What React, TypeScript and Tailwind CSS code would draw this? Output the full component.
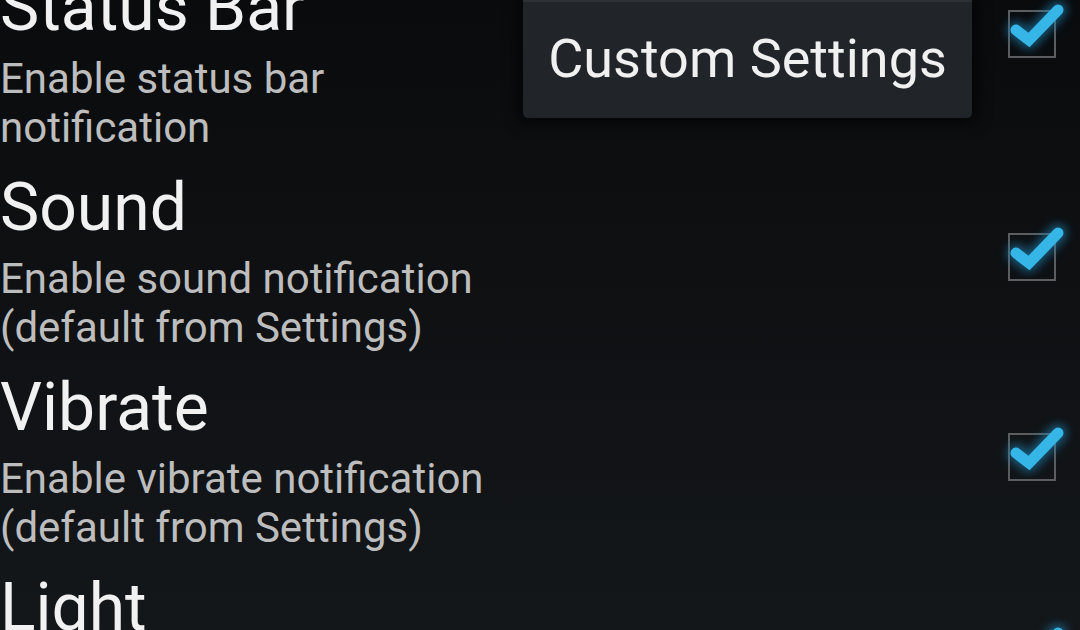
import React from "react";

type Item = { title: string; lines: string[]; checked: boolean; boxTop: number };

const items: Item[] = [
  { title: "Status Bar", lines: ["Enable status bar", "notification"], checked: true, boxTop: 50 },
  { title: "Sound", lines: ["Enable sound notification", "(default from Settings)"], checked: true, boxTop: 73 },
  { title: "Vibrate", lines: ["Enable vibrate notification", "(default from Settings)"], checked: true, boxTop: 73 },
  { title: "Light", lines: ["Enable light notification", "(default from Settings)"], checked: true, boxTop: 73 },
];

function CheckBox() {
  return (
    <div className="relative w-[48px] h-[48px]">
      <div className="absolute inset-0 border-2 border-[#5b5d60]" />
      <svg
        className="absolute left-[-10px] top-[-22px] overflow-visible"
        width="72"
        height="64"
        viewBox="0 0 72 64"
      >
        <defs>
          <filter id="glow" x="-50%" y="-50%" width="200%" height="200%">
            <feGaussianBlur stdDeviation="5" />
          </filter>
        </defs>
        <polyline
          points="18,42 31,52 60,22"
          fill="none"
          stroke="#1d86ba"
          strokeWidth="18"
          strokeLinecap="round"
          strokeLinejoin="round"
          opacity="0.6"
          filter="url(#glow)"
        />
        <polyline
          points="18,42 31,52 60,22"
          fill="none"
          stroke="#36b5e7"
          strokeWidth="11"
          strokeLinecap="round"
          strokeLinejoin="miter"
        />
      </svg>
    </div>
  );
}

export default function App() {
  return (
    <div
      className="relative w-[1080px] h-[630px] overflow-hidden bg-gradient-to-b from-[#0a0b0d] to-[#14171a]"
      style={{ fontFamily: "Roboto, 'Noto Sans', sans-serif" }}
    >
      <div className="-mt-[40px] flex flex-col">
        {items.map((it) => (
          <div key={it.title} className="flex h-[200px] w-full">
            <div className="flex-1 pt-[10px] pl-0">
              <div className="text-[66px] leading-[76px] text-[#f1f1f1]">{it.title}</div>
              <div className="mt-[8px] text-[42px] leading-[49px] text-[#bdbdbe]">
                {it.lines.map((l) => (
                  <div key={l}>{l}</div>
                ))}
              </div>
            </div>
            <div className="w-[72px] shrink-0" style={{ paddingTop: it.boxTop }}>
              {it.checked && <CheckBox />}
            </div>
          </div>
        ))}
      </div>
      <div className="absolute left-[523px] top-0 w-[449px] h-[118px] rounded-b-[5px] bg-[#212429] border-t-2 border-[#2d3035] shadow-[0_0_14px_6px_rgba(0,0,0,0.55)] flex items-center justify-center">
        <span className="text-[54px] leading-none text-[#f0f0f0] -mt-[2px]">Custom Settings</span>
      </div>
    </div>
  );
}
